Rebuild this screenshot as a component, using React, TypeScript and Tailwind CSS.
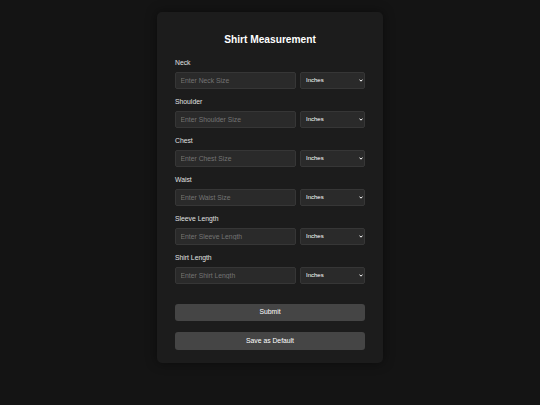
import React from 'react';

const fields = [
  { label: 'Neck', placeholder: 'Enter Neck Size' },
  { label: 'Shoulder', placeholder: 'Enter Shoulder Size' },
  { label: 'Chest', placeholder: 'Enter Chest Size' },
  { label: 'Waist', placeholder: 'Enter Waist Size' },
  { label: 'Sleeve Length', placeholder: 'Enter Sleeve Length' },
  { label: 'Shirt Length', placeholder: 'Enter Shirt Length' },
];

const App: React.FC = () => {
  return (
    <div
      className="w-[540px] h-[405px] bg-[#141414] flex justify-center"
      style={{ fontFamily: '"Liberation Sans", Arial, sans-serif' }}
    >
      <div className="w-[226px] h-[351px] mt-[12px] bg-[#1c1c1c] rounded-[5px] shadow-[0_0_12px_rgba(0,0,0,0.45)] px-[18px] pt-[21px] flex flex-col">
        <h1 className="text-center text-white font-bold text-[10.2px] leading-[13px] mb-[12.5px]">
          Shirt Measurement
        </h1>
        {fields.map((f) => (
          <div key={f.label} className="mb-[8.6px]">
            <label className="block text-[#e0e0e0] text-[6.8px] leading-[8px] mb-[5.5px]">{f.label}</label>
            <div className="flex gap-[4px]">
              <input
                type="text"
                placeholder={f.placeholder}
                className="block w-[121px] h-[17px] rounded-[2px] bg-[#2a2a2a] border border-[#363636] px-[4.5px] text-[6.8px] text-white placeholder:text-[#747474] outline-none"
              />
              <div className="relative w-[65px] h-[17px]">
                <select
                  defaultValue="inches"
                  className="block appearance-none w-full h-full rounded-[2px] bg-[#2a2a2a] border border-[#363636] pl-[5px] text-[6px] leading-[15px] text-white outline-none"
                >
                  <option value="inches">Inches</option>
                  <option value="cm">Centimeters</option>
                </select>
                <svg
                  className="absolute right-[2.5px] top-[7px] w-[4px] h-[3px] pointer-events-none"
                  viewBox="0 0 4 3"
                  fill="none"
                >
                  <path d="M0.5 0.6 L2 2.2 L3.5 0.6" stroke="#ffffff" strokeWidth="1" />
                </svg>
              </div>
            </div>
          </div>
        ))}
        <button className="mt-[10.5px] w-full h-[17.5px] rounded-[3px] bg-[#454545] text-white text-[6.8px]">
          Submit
        </button>
        <button className="mt-[11px] w-full h-[17.5px] rounded-[3px] bg-[#454545] text-white text-[6.8px]">
          Save as Default
        </button>
      </div>
    </div>
  );
};

export default App;
